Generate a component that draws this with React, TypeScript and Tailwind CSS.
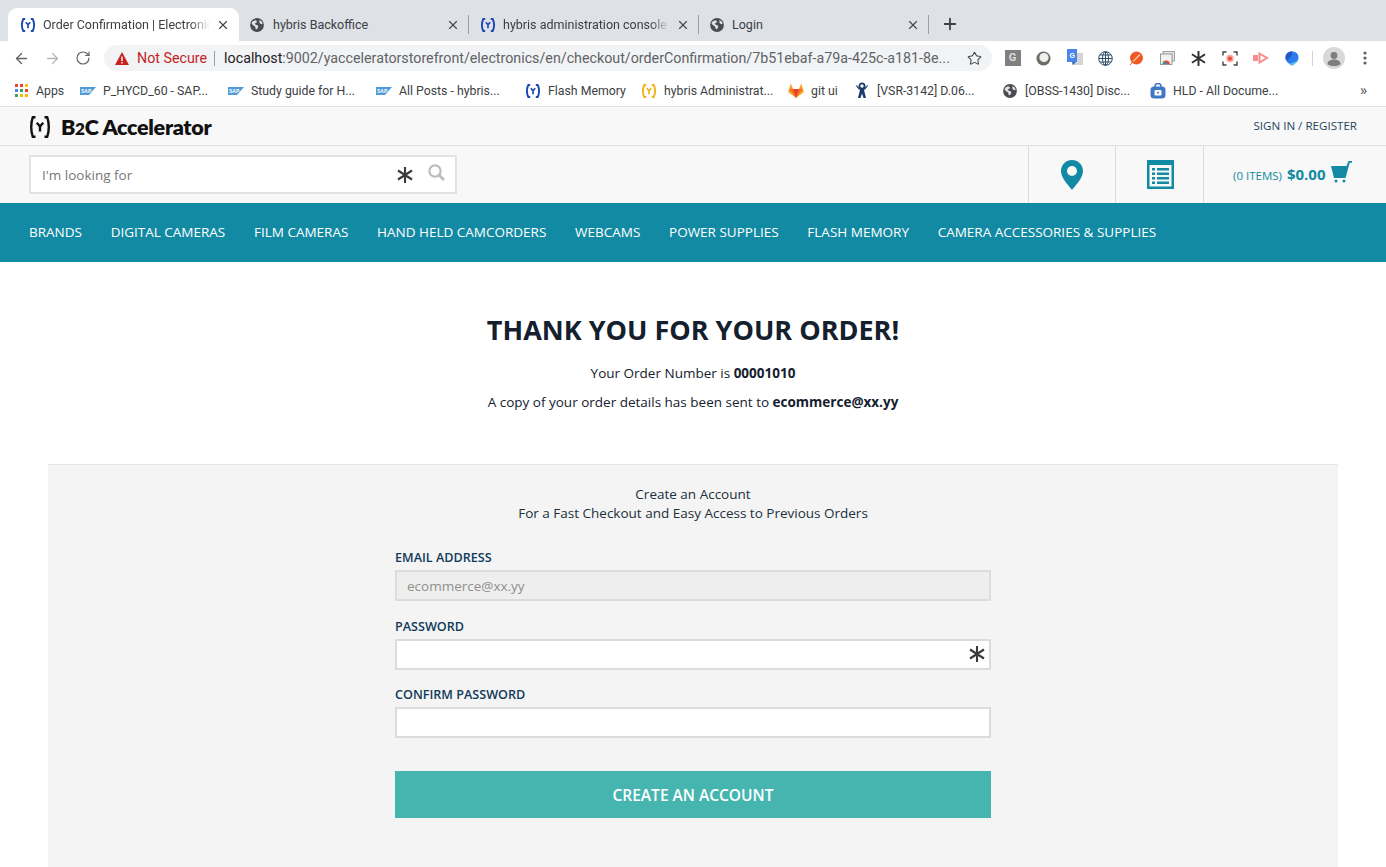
import React from "react";
import { ArrowLeft, ArrowRight, RotateCw, Star, X, Plus } from "lucide-react";

const ui = "font-['Roboto','Liberation_Sans',sans-serif]";

function HybrisIcon({ color = "#1c49b4", size = 14 }: { color?: string; size?: number }) {
  return (
    <svg width={size} height={size} viewBox="0 0 14 14" fill="none" className="shrink-0">
      <path d="M4.200 1H2.300C1.300 3 .9 5 .9 7s.4 4 1.400 6h1.900" stroke={color} strokeWidth="1.900" />
      <path d="M9.800 1h1.900c1 2 1.400 4 1.400 6s-.4 4-1.400 6H9.800" stroke={color} strokeWidth="1.900" />
      <path d="M4.800 4.200L7 6.800l2.200-2.600M7 6.500v3.800" stroke={color} strokeWidth="1.700" />
    </svg>
  );
}

function Globe({ size = 14 }: { size?: number }) {
  return (
    <svg width={size} height={size} viewBox="0 0 14 14" className="shrink-0">
      <circle cx="7" cy="7" r="6.900" fill="#4a4c50" />
      <path d="M2.400 3.400L5 2.200l2 .9-.6 1.700-1.600.6.9 1.400 2 .5.6 1.600-1.400 2.400-1.200-.2-.6-2.600L3 7.200 1.500 5.600z" fill="#dee1e6" />
      <path d="M9.400 2.100l2.400 1.500.9 2.200-1.500.5-1.700-1.200z" fill="#dee1e6" />
    </svg>
  );
}

function SapIcon() {
  return (
    <svg width="16" height="10" viewBox="0 0 16 10" className="shrink-0">
      <path d="M0 1h16L9 9H0z" fill="#4f9ad8" />
      <text x="1" y="6.500" fontSize="5" fontWeight="700" fill="#fff" fontFamily="Liberation Sans, sans-serif">SAP</text>
    </svg>
  );
}

function Asterisk({ size = 16, color = "#3a3a3a" }: { size?: number; color?: string }) {
  return (
    <svg width={size} height={size} viewBox="0 0 16 16" className="shrink-0" stroke={color} strokeWidth="2.100">
      <path d="M8 0v16M1 3.500l14 9M15 3.500l-14 9" />
    </svg>
  );
}

function Tab({ title, icon, fade, active, width, sep, pad, gap }: { title: string; icon: React.ReactNode; fade?: boolean; active?: boolean; width: string; sep?: boolean; pad: string; gap: string }) {
  return (
    <div className={`relative flex items-center h-[33px] ${width} ${active ? "bg-white rounded-t-[9px]" : ""} ${pad} pr-[9px]`}>
      {icon}
      <span className={`${gap} min-w-0 flex-1 overflow-hidden whitespace-nowrap pt-[1px] text-[12.5px] text-[#3c4043] ${ui}`} style={fade ? { maskImage: "linear-gradient(to right,#000 88%,transparent)" } : undefined}>
        {title}
      </span>
      <X size={14} strokeWidth={2} className="ml-[6px] shrink-0 text-[#45474b]" />
      {sep && <span className="absolute right-0 top-[7px] h-[19px] w-px bg-[#9aa0a6]" />}
    </div>
  );
}

function Bookmark({ icon, label, width }: { icon: React.ReactNode; label: string; width: string }) {
  return (
    <div className={`flex items-center ${width} shrink-0`}>
      <span className="flex w-[16px] shrink-0 justify-center">{icon}</span>
      <span className={`ml-[7px] whitespace-nowrap pt-[1px] text-[12.3px] text-[#3c4043] ${ui}`}>{label}</span>
    </div>
  );
}

function AppsIcon() {
  const c = ["#ea4335", "#ea4335", "#fbbc05", "#4285f4", "#34a853", "#ea4335", "#34a853", "#fbbc05", "#fbbc05"];
  return (
    <div className="grid grid-cols-3 gap-[2px]">
      {c.map((x, i) => (
        <span key={i} className="h-[3px] w-[3px]" style={{ background: x }} />
      ))}
    </div>
  );
}

function GitLab() {
  return (
    <svg width="16" height="15" viewBox="0 0 16 15" className="shrink-0">
      <path d="M8 15L.2 9l.9-3.200L2.900.4 5 6h6L13.100.4l1.800 5.400.9 3.200z" fill="#fca326" />
      <path d="M8 15L1.100 5.800H5zM8 15l6.900-9.200H11z" fill="#fc6d26" />
      <path d="M8 15L5 6h6z" fill="#e24329" />
    </svg>
  );
}

function Jira() {
  return (
    <svg width="14" height="17" viewBox="0 0 14 17" className="shrink-0">
      <circle cx="7" cy="4" r="2.600" fill="#fff" stroke="#1b3a6b" strokeWidth="1.800" />
      <path d="M.5 2.500C2 6 4 7.500 5 8L3 16h2.500L7 11.500 8.500 16H11L9 8c1-.5 3-2 4.500-5.500L11 4.500 9 7H5L3 4.500z" fill="#1b3a6b" />
    </svg>
  );
}

function LockBook() {
  return (
    <svg width="16" height="16" viewBox="0 0 16 16" className="shrink-0">
      <rect x="0.500" y="3.500" width="15" height="12" rx="3.500" fill="#3f78c7" />
      <path d="M5 6V3.500a3 3 0 016 0V6" stroke="#3f78c7" strokeWidth="1.600" fill="none" />
      <rect x="4.500" y="7" width="7" height="5.500" rx="1" fill="#fff" />
      <circle cx="8" cy="9.700" r="1" fill="#3f78c7" />
    </svg>
  );
}

function Ext({ children }: { children: React.ReactNode }) {
  return <span className="flex h-[18px] w-[31px] items-center justify-center">{children}</span>;
}

function Extensions() {
  return (
    <div className="flex items-center ml-[5px]">
      <Ext>
        <span className="flex h-[16px] w-[16px] items-center justify-center bg-[#808080] text-[11px] font-bold text-[#dcdcdc]">G</span>
      </Ext>
      <Ext>
        <svg width="15" height="15" viewBox="0 0 15 15"><circle cx="7.500" cy="7.500" r="7" fill="#6f6a64" /><circle cx="8" cy="6.500" r="4.600" fill="#f0f0f0" /></svg>
      </Ext>
      <Ext>
        <svg width="16" height="18" viewBox="0 0 16 18"><rect x="5" y="4" width="11" height="12" fill="#d5d5d5" /><rect width="10" height="13" fill="#4a86e8" /><path d="M6 16l3-3H5z" fill="#3367c5" /><text x="2.500" y="9" fontSize="7" fontWeight="700" fill="#fff" fontFamily="Liberation Sans, sans-serif">G</text></svg>
      </Ext>
      <Ext>
        <svg width="15" height="15" viewBox="0 0 15 15" fill="none" stroke="#2f4a66" strokeWidth="1"><circle cx="7.500" cy="7.500" r="6.800" /><ellipse cx="7.500" cy="7.500" rx="3" ry="6.800" /><path d="M1 7.500h13M2 4h11M2 11h11M7.500 1v13" /></svg>
      </Ext>
      <Ext>
        <svg width="15" height="15" viewBox="0 0 15 15"><circle cx="7.500" cy="7" r="6.500" fill="#ef5a24" /><path d="M4 10.500l7-7" stroke="#f5c5a5" strokeWidth="1.500" /><path d="M1 14l3-3.500" stroke="#ef5a24" strokeWidth="1" /></svg>
      </Ext>
      <Ext>
        <svg width="15" height="14" viewBox="0 0 15 14"><rect x="3" y="0.500" width="11.500" height="9.500" fill="#e2e2e2" stroke="#8f8f8f" strokeWidth=".8" /><rect x="0.500" y="3" width="11.500" height="10.500" fill="#f2f2f2" stroke="#7f7f7f" strokeWidth=".8" /><path d="M2.600 13a3.600 3.600 0 017.200 0z" fill="#ea4335" /><path d="M2.600 13a3.600 3.600 0 012-3.200l1.200 3.200z" fill="#34a853" /><path d="M4.800 13a1.400 1.400 0 012.800 0z" fill="#4285f4" /></svg>
      </Ext>
      <Ext>
        <Asterisk size={15} color="#333" />
      </Ext>
      <Ext>
        <svg width="16" height="15" viewBox="0 0 16 15" fill="none"><path d="M1 4.500V1h3.500M11.500 1H15v3.500M15 10.500V14h-3.500M4.500 14H1v-3.500" stroke="#444" strokeWidth="1.400" /><circle cx="8" cy="7.500" r="3.800" fill="#f7a9a1" /><circle cx="8" cy="7.500" r="2" fill="#e8453c" /></svg>
      </Ext>
      <Ext>
        <svg width="16" height="12" viewBox="0 0 16 12"><rect x="0" y="3" width="5" height="6" fill="#f88c8c" /><path d="M6.500 1.500L14 6l-7.500 4.500z" fill="none" stroke="#f88c8c" strokeWidth="2" /></svg>
      </Ext>
      <Ext>
        <svg width="14" height="15" viewBox="0 0 14 15"><path d="M7 .5c4 0 6.500 2.500 6.500 6 0 4-3.500 6.500-6.500 8-3-1.500-6.500-4-6.500-8C.5 3 3 .5 7 .5z" fill="#2b7de9" /><path d="M7 .5C3 .5.5 3 .5 6.500c0 1 .2 2 .6 2.800C4 8 8 5 7 .5z" fill="#2456c4" /><path d="M4 12.500c3 0 7-1.500 9.300-4.500C12.500 11 10 13 7 14.500z" fill="#5cc4f2" /></svg>
      </Ext>
    </div>
  );
}

function Chrome() {
  return (
    <div className={`bg-white ${ui}`}>
      <div className="flex h-[41px] items-end bg-[#dee1e6] pl-[8px]">
        <Tab active width="w-[231px]" pad="pl-[13px]" gap="ml-[8px]" title="Order Confirmation | Electronics Site" fade icon={<HybrisIcon />} />
        <Tab width="w-[230px]" pad="pl-[11px]" gap="ml-[9px]" sep title="hybris Backoffice" icon={<Globe />} />
        <Tab width="w-[230px]" pad="pl-[12px]" gap="ml-[8px]" sep title="hybris administration console | Login" fade icon={<HybrisIcon />} />
        <Tab width="w-[230px]" pad="pl-[11px]" gap="ml-[8px]" sep title="Login" icon={<Globe />} />
        <Plus size={18} strokeWidth={2.4} className="ml-[12px] mb-[8px] text-[#3c4043]" />
      </div>
      <div className="flex h-[34px] items-center">
        <div className="flex w-[104px] shrink-0 items-center pl-[13px] text-[#5f6368]">
          <ArrowLeft size={17} strokeWidth={1.800} />
          <ArrowRight size={17} strokeWidth={1.800} className="ml-[14px] text-[#b4b7bb]" />
          <RotateCw size={16} strokeWidth={1.800} className="ml-[14px]" />
        </div>
        <div className="flex h-[26px] w-[888px] shrink-0 items-center rounded-full bg-[#f1f3f4] pl-[11px] pr-[10px]">
          <svg width="14" height="13" viewBox="0 0 14 13" className="shrink-0"><path d="M7 0l7 13H0z" fill="#c5221f" /><path d="M6.300 4.500h1.400v4.500H6.300zM6.300 10h1.400v1.400H6.300z" fill="#fff" /></svg>
          <span className="ml-[8px] pt-[1px] text-[14.25px] text-[#c5221f]">Not Secure</span>
          <span className="ml-[7px] h-[15px] w-px bg-[#9aa0a6]" />
          <span className="ml-[9px] min-w-0 flex-1 overflow-hidden whitespace-nowrap pt-[1px] text-[14.25px] text-[#5f6368]">
            <span className="text-[#202124]">localhost</span>:9002/yacceleratorstorefront/electronics/en/checkout/orderConfirmation/7b51ebaf-a79a-425c-a181-8e...
          </span>
          <Star size={15} strokeWidth={1.700} className="ml-[8px] shrink-0 text-[#45474b]" />
        </div>
        <Extensions />
        <span className="ml-[5px] h-[15px] w-px bg-[#d0d3d7]" />
        <span className="ml-[10px] flex h-[22px] w-[22px] items-center justify-center overflow-hidden rounded-full bg-[#d8d8d8]">
          <svg width="22" height="22" viewBox="0 0 22 22"><circle cx="11" cy="8.500" r="3.400" fill="#7d7d7d" /><path d="M4.500 17c0-3 3-4.500 6.500-4.500s6.500 1.500 6.500 4.500c-1.500 1.500-3.500 2-6.500 2s-5-.5-6.500-2z" fill="#7d7d7d" /></svg>
        </span>
        <svg width="4" height="14" viewBox="0 0 4 14" className="ml-[18px]" fill="#5f6368"><circle cx="2" cy="2" r="1.600" /><circle cx="2" cy="7" r="1.600" /><circle cx="2" cy="12" r="1.600" /></svg>
      </div>
      <div className="flex h-[31px] items-center pl-[13px]">
        <Bookmark width="w-[67px]" icon={<AppsIcon />} label="Apps" />
        <Bookmark width="w-[148px]" icon={<SapIcon />} label="P_HYCD_60 - SAP..." />
        <Bookmark width="w-[148px]" icon={<SapIcon />} label="Study guide for H..." />
        <Bookmark width="w-[149px]" icon={<SapIcon />} label="All Posts - hybris..." />
        <Bookmark width="w-[116px]" icon={<HybrisIcon />} label="Flash Memory" />
        <Bookmark width="w-[147px]" icon={<HybrisIcon color="#f5b11a" />} label="hybris Administrat..." />
        <Bookmark width="w-[66px]" icon={<GitLab />} label="git ui" />
        <Bookmark width="w-[148px]" icon={<Jira />} label="[VSR-3142] D.06..." />
        <Bookmark width="w-[148px]" icon={<Globe />} label="[OBSS-1430] Disc..." />
        <Bookmark width="w-[210px]" icon={<LockBook />} label="HLD - All Docume..." />
        <span className="text-[15px] font-medium leading-none text-[#5f6368]">»</span>
      </div>
    </div>
  );
}

function Storefront() {
  const nav = ["Brands", "Digital Cameras", "Film Cameras", "Hand Held Camcorders", "Webcams", "Power Supplies", "Flash Memory", "Camera Accessories & Supplies"];
  return (
    <div className="font-['Open_Sans',sans-serif]">
      <div className="flex h-[40px] items-center justify-between border-y border-[#e3e3e3] bg-[#f8f8f8] pl-[30px] pr-[29px]">
        <div className="flex items-center">
          <svg width="20" height="22" viewBox="0 0 20 22" fill="none" stroke="#111" className="mt-[2px] shrink-0">
            <path d="M5.500 1.200H2.800C1.700 4.500 1.200 8 1.200 11s.5 6.500 1.600 9.800h2.700" strokeWidth="2.400" />
            <path d="M14.500 1.200h2.700c1.100 3.300 1.600 6.800 1.600 9.800s-.5 6.500-1.600 9.800h-2.700" strokeWidth="2.400" />
            <path d="M6.800 6.800L10 10.500l3.200-3.700M10 10v5.500" strokeWidth="2.400" />
          </svg>
          <span className="ml-[11px] mt-[4px] font-['Lato',sans-serif] text-[21.5px] font-extrabold leading-none tracking-[-0.3px] text-[#111]">
            B<span className="text-[17px]">2</span>C Accelerator
          </span>
        </div>
        <span className="text-[11.6px] text-[#27465c]">SIGN IN / REGISTER</span>
      </div>
      <div className="flex h-[57px] items-stretch justify-between bg-[#f8f8f8] pl-[29px]">
        <div className="flex items-center">
          <div className="flex h-[39px] w-[428px] items-center border-2 border-[#e3e3e3] bg-white pl-[11px] pr-[10px]">
            <span className="flex-1 pt-[2px] text-[13.5px] text-[#777]">I'm looking for</span>
            <Asterisk size={16} />
            <svg width="17" height="17" viewBox="0 0 17 17" fill="none" stroke="#b9bdc0" className="ml-[15px] mb-[4px] shrink-0">
              <circle cx="7" cy="7" r="5.600" strokeWidth="2.200" />
              <path d="M11.200 11.200L16 16" strokeWidth="2.800" />
            </svg>
          </div>
        </div>
        <div className="flex items-stretch">
          <div className="flex w-[87px] items-center justify-center border-l border-[#dcdcdc]">
            <svg width="22" height="30" viewBox="0 0 22 30">
              <path fillRule="evenodd" d="M11 0C17 0 22 4.800 22 11c0 7-6.500 13-11 19C6.500 24 0 18 0 11 0 4.800 5 0 11 0zm0 6a5 5 0 100 10 5 5 0 000-10z" fill="#128aa3" />
            </svg>
          </div>
          <div className="flex w-[88px] items-center justify-center border-l border-[#dcdcdc] pl-[1px]">
            <svg width="27" height="29" viewBox="0 0 27 29">
              <path fillRule="evenodd" d="M0 0h27v29H0zM2.500 5v21.500h22V5z" fill="#128aa3" />
              <path d="M5 8h3v2.500H5zM10 8h12v2.500H10zM5 12.500h3V15H5zM10 12.500h12V15H10zM5 17h3v2.500H5zM10 17h12v2.500H10zM5 21.500h3V24H5zM10 21.500h12V24H10z" fill="#128aa3" />
            </svg>
          </div>
          <div className="flex w-[183px] items-center border-l border-[#dcdcdc] pl-[29px]">
            <span className="mt-[3px] text-[11.5px] text-[#128aa3]">(0 ITEMS)</span>
            <span className="ml-[5px] text-[15px] font-bold text-[#128aa3]">$0.00</span>
            <svg width="21" height="22" viewBox="0 0 21 22" className="ml-[5px] mb-[5px]">
              <path d="M0 5h15.500l2-5H21v1.800h-2.300L14.500 17H3L0 5z" fill="#128aa3" />
              <circle cx="5" cy="20" r="1.500" fill="#128aa3" />
              <circle cx="13" cy="20" r="1.500" fill="#128aa3" />
            </svg>
          </div>
        </div>
      </div>
      <div className="flex h-[59px] items-center gap-[28.7px] bg-[#128aa3] pl-[29px]">
        {nav.map((n) => (
          <span key={n} className="text-[13.5px] font-medium uppercase text-white">{n}</span>
        ))}
      </div>
    </div>
  );
}

function Field({ label, disabled, value, star }: { label: string; disabled?: boolean; value?: string; star?: boolean }) {
  return (
    <div className="mb-[16.5px]">
      <div className="mb-[3px] text-[12.6px] font-semibold uppercase leading-[18px] text-[#0f3a5a]">{label}</div>
      <div className={`flex h-[31px] items-center border-2 border-[#dcdcdc] pl-[10px] pr-[4px] ${disabled ? "bg-[#eeeeee]" : "bg-white"}`}>
        <span className="flex-1 pt-[2px] text-[13.5px] text-[#8f8f8f]">{value}</span>
        {star && <Asterisk size={16} />}
      </div>
    </div>
  );
}

export default function App() {
  return (
    <div className="h-[867px] w-[1386px] overflow-hidden bg-white font-['Open_Sans',sans-serif]">
      <Chrome />
      <Storefront />
      <div className="pt-[50px] text-center text-[#14202d]">
        <h1 className="text-[27px] font-bold leading-[36px]">THANK YOU FOR YOUR ORDER!</h1>
        <p className="mt-[15px] text-[13.5px] leading-[20px]">
          Your Order Number is <b>00001010</b>
        </p>
        <p className="mt-[9px] text-[13.5px] leading-[20px]">
          A copy of your order details has been sent to <b>ecommerce@xx.yy</b>
        </p>
      </div>
      <div className="mx-[48px] mt-[52px] h-[420px] border-t border-[#e5e5e5] bg-[#f4f4f4] pt-[20px]">
        <div className="text-center text-[13.5px] leading-[19px] text-[#20303c]">
          <div>Create an Account</div>
          <div>For a Fast Checkout and Easy Access to Previous Orders</div>
        </div>
        <div className="mx-auto mt-[26px] w-[596px]">
          <Field label="Email Address" disabled value="ecommerce@xx.yy" />
          <Field label="Password" star />
          <Field label="Confirm Password" />
          <button className="mt-[33px] flex h-[47px] w-full items-center justify-center bg-[#46b5b0] pt-[2px] text-[15.5px] font-semibold uppercase text-white">
            Create an Account
          </button>
        </div>
      </div>
    </div>
  );
}
